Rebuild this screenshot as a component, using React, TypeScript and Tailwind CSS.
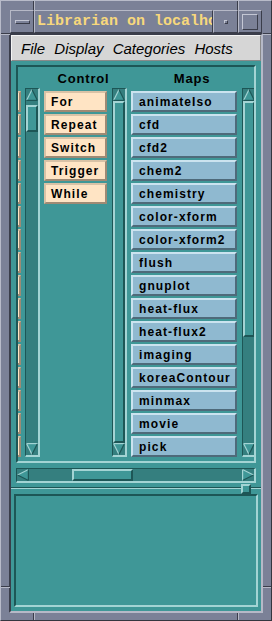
import React from 'react';

const controls = ['For', 'Repeat', 'Switch', 'Trigger', 'While'];
const maps = [
  'animateIso', 'cfd', 'cfd2', 'chem2', 'chemistry', 'color-xform', 'color-xform2', 'flush',
  'gnuplot', 'heat-flux', 'heat-flux2', 'imaging', 'koreaContour', 'minmax', 'movie', 'pick',
];

function UpArrow() {
  return (
    <svg width="12" height="12" viewBox="0 0 12 12" className="block shrink-0">
      <polygon points="6,1 1,11 11,11" fill="#3f9797" />
      <line x1="6" y1="0.5" x2="0.8" y2="11" stroke="#a3d4d4" strokeWidth="1.2" />
      <line x1="6" y1="0.5" x2="11.2" y2="11" stroke="#1d5656" strokeWidth="1.2" />
      <line x1="0.5" y1="11.4" x2="11.5" y2="11.4" stroke="#1d5656" strokeWidth="1.2" />
    </svg>
  );
}

function DownArrow() {
  return (
    <svg width="12" height="12" viewBox="0 0 12 12" className="block shrink-0">
      <polygon points="1,1 11,1 6,11" fill="#3f9797" />
      <line x1="0.5" y1="0.6" x2="11.5" y2="0.6" stroke="#a3d4d4" strokeWidth="1.2" />
      <line x1="0.8" y1="1" x2="6" y2="11.5" stroke="#a3d4d4" strokeWidth="1.2" />
      <line x1="11.2" y1="1" x2="6" y2="11.5" stroke="#1d5656" strokeWidth="1.2" />
    </svg>
  );
}

function LeftArrow() {
  return (
    <svg width="12" height="12" viewBox="0 0 12 12" className="block shrink-0">
      <polygon points="1,6 11,1 11,11" fill="#3f9797" />
      <line x1="0.5" y1="6" x2="11" y2="0.8" stroke="#a3d4d4" strokeWidth="1.2" />
      <line x1="0.5" y1="6" x2="11" y2="11.2" stroke="#1d5656" strokeWidth="1.2" />
      <line x1="11.4" y1="0.5" x2="11.4" y2="11.5" stroke="#1d5656" strokeWidth="1.2" />
    </svg>
  );
}

function RightArrow() {
  return (
    <svg width="12" height="12" viewBox="0 0 12 12" className="block shrink-0">
      <polygon points="1,1 11,6 1,11" fill="#3f9797" />
      <line x1="0.6" y1="0.5" x2="0.6" y2="11.5" stroke="#a3d4d4" strokeWidth="1.2" />
      <line x1="1" y1="0.8" x2="11.5" y2="6" stroke="#a3d4d4" strokeWidth="1.2" />
      <line x1="1" y1="11.2" x2="11.5" y2="6" stroke="#1d5656" strokeWidth="1.2" />
    </svg>
  );
}

function VScroll({ thumbClass, tail }: { thumbClass: string; tail: boolean }) {
  return (
    <div className="w-[15px] shrink-0 h-full flex flex-col bg-[#357f7f] border-t border-l border-r-2 border-b-2 border-t-[#1d5656] border-l-[#1d5656] border-r-[#a3d4d4] border-b-[#a3d4d4]">
      <UpArrow />
      <div className="flex-1 flex flex-col">
        <div
          className={
            'w-[12px] bg-[#3f9797] border-2 border-t-[#a3d4d4] border-l-[#a3d4d4] border-r-[#1d5656] border-b-[#1d5656] ' +
            thumbClass
          }
        />
        {tail ? <div className="flex-1" /> : null}
      </div>
      <DownArrow />
    </div>
  );
}

function CtrlBtn({ label }: { label: string }) {
  return (
    <div className="w-[63px] h-[21px] shrink-0 bg-[#ffe4c4] border-2 border-t-[#d9c2a6] border-l-[#d9c2a6] border-r-[#9f8a74] border-b-[#9f8a74] flex items-center pl-[5px] text-[12px] font-bold tracking-[1.1px] text-black leading-none">
      {label}
    </div>
  );
}

function MapBtn({ label }: { label: string }) {
  return (
    <div className="w-[106px] h-[21px] shrink-0 bg-[#8fb9d0] border-2 border-t-[#cbe3ef] border-l-[#cbe3ef] border-r-[#4e6a7a] border-b-[#4e6a7a] flex items-center pl-[6px] text-[12px] font-bold tracking-[1.1px] text-black leading-none whitespace-nowrap">
      {label}
    </div>
  );
}

function Tick({ cls }: { cls: string }) {
  return <div className={'absolute ' + cls} />;
}

export default function App() {
  return (
    <div className="relative w-[272px] h-[621px] bg-[#7b8197] border border-t-[#b8bbc9] border-l-[#b8bbc9] border-r-[#34363f] border-b-[#34363f] pt-[9px] pl-[9px] pr-[9px] pb-[7px] flex flex-col font-['Liberation_Sans',_Arial,_sans-serif] overflow-hidden">
      {/* frame ticks */}
      <Tick cls="left-[32px] top-0 w-[1px] h-[9px] bg-[#3a3d4a]" />
      <Tick cls="left-[33px] top-0 w-[1px] h-[9px] bg-[#b6b9c7]" />
      <Tick cls="left-[236px] top-0 w-[1px] h-[9px] bg-[#3a3d4a]" />
      <Tick cls="left-[237px] top-0 w-[1px] h-[9px] bg-[#b6b9c7]" />
      <Tick cls="left-0 top-[32px] w-[9px] h-[1px] bg-[#3a3d4a]" />
      <Tick cls="left-0 top-[33px] w-[9px] h-[1px] bg-[#b6b9c7]" />
      <Tick cls="right-0 top-[32px] w-[8px] h-[1px] bg-[#3a3d4a]" />
      <Tick cls="right-0 top-[33px] w-[8px] h-[1px] bg-[#b6b9c7]" />
      <Tick cls="left-0 top-[585px] w-[9px] h-[1px] bg-[#3a3d4a]" />
      <Tick cls="left-0 top-[586px] w-[9px] h-[1px] bg-[#b6b9c7]" />
      <Tick cls="right-0 top-[585px] w-[8px] h-[1px] bg-[#3a3d4a]" />
      <Tick cls="right-0 top-[586px] w-[8px] h-[1px] bg-[#b6b9c7]" />
      <Tick cls="left-[32px] bottom-0 w-[1px] h-[7px] bg-[#3a3d4a]" />
      <Tick cls="left-[33px] bottom-0 w-[1px] h-[7px] bg-[#b6b9c7]" />
      <Tick cls="left-[236px] bottom-0 w-[1px] h-[7px] bg-[#3a3d4a]" />
      <Tick cls="left-[237px] bottom-0 w-[1px] h-[7px] bg-[#b6b9c7]" />

      {/* title bar */}
      <div className="flex h-[23px] shrink-0">
        <div className="w-[24px] h-full border border-t-[#b6b9c7] border-l-[#b6b9c7] border-r-[#3a3d4a] border-b-[#3a3d4a] flex items-center justify-center">
          <div className="w-[15px] h-[4px] border border-t-[#c4c7d4] border-l-[#c4c7d4] border-r-[#3a3d4a] border-b-[#3a3d4a]" />
        </div>
        <div className="w-[179px] h-full border border-t-[#b6b9c7] border-l-[#b6b9c7] border-r-[#3a3d4a] border-b-[#3a3d4a] overflow-hidden flex items-center pl-[2px]">
          <span className="font-['Liberation_Mono',_monospace] font-bold text-[15px] leading-none text-[#f7d87c] whitespace-nowrap">
            Librarian on localhost
          </span>
        </div>
        <div className="w-[25px] h-full border border-t-[#b6b9c7] border-l-[#b6b9c7] border-r-[#3a3d4a] border-b-[#3a3d4a] flex items-center justify-center">
          <div className="w-[4px] h-[4px] border border-t-[#c4c7d4] border-l-[#c4c7d4] border-r-[#3a3d4a] border-b-[#3a3d4a]" />
        </div>
        <div className="w-[24px] h-full border border-t-[#b6b9c7] border-l-[#b6b9c7] border-r-[#3a3d4a] border-b-[#3a3d4a] flex items-center justify-center">
          <div className="w-[16px] h-[16px] border border-t-[#c4c7d4] border-l-[#c4c7d4] border-r-[#3a3d4a] border-b-[#3a3d4a]" />
        </div>
      </div>

      {/* client area */}
      <div className="-mx-[1px] flex-1 flex flex-col border-2 border-t-[#3a3d4a] border-l-[#3a3d4a] border-r-[#b6b9c7] border-b-[#b6b9c7]">
        {/* menu bar */}
        <div className="h-[26px] shrink-0 bg-[#d6d6d6] border border-t-[#f4f4f4] border-l-[#f4f4f4] border-r-[#8a8a8a] border-b-[#8a8a8a] flex items-center pl-[9px] pt-[1px]">
          <span className="italic text-[15px] leading-none text-black [word-spacing:5px] whitespace-nowrap">
            File Display Categories Hosts
          </span>
        </div>

        {/* teal content */}
        <div className="flex-1 bg-[#3f9797] flex flex-col pt-[4px] pb-[4px]">
          {/* scrolled window */}
          <div className="mx-[5px] h-[398px] shrink-0 border-2 border-t-[#1d5656] border-l-[#1d5656] border-r-[#a3d4d4] border-b-[#a3d4d4] flex overflow-hidden">
            {/* hidden left column */}
            <div className="w-[22px] shrink-0 flex flex-col">
              <div className="h-[21px] shrink-0" />
              <div className="h-[369px] flex">
                <div className="w-[3px] flex flex-col gap-[2px] pt-[3px]">
                  {maps.map((m) => (
                    <div
                      key={m}
                      className="w-[3px] h-[21px] shrink-0 bg-[#ffe4c4] border-t-2 border-r-2 border-b-2 border-t-[#d9c2a6] border-r-[#9f8a74] border-b-[#9f8a74]"
                    />
                  ))}
                </div>
                <div className="w-[4px]" />
                <VScroll thumbClass="mt-[4px] h-[27px]" tail={true} />
              </div>
            </div>

            {/* Control column */}
            <div className="w-[87px] shrink-0 flex flex-col">
              <div className="h-[21px] shrink-0 flex items-center justify-center pt-[1px] text-[13px] font-bold tracking-[0.8px] text-black leading-none">
                Control
              </div>
              <div className="h-[369px] flex">
                <div className="pl-[4px] pt-[3px] flex flex-col gap-[2px]">
                  {controls.map((c) => (
                    <CtrlBtn key={c} label={c} />
                  ))}
                </div>
                <div className="w-[5px]" />
                <VScroll thumbClass="flex-1" tail={false} />
              </div>
            </div>

            {/* Maps column */}
            <div className="w-[130px] shrink-0 flex flex-col">
              <div className="h-[21px] shrink-0 flex items-center justify-center pt-[1px] text-[13px] font-bold tracking-[0.8px] text-black leading-none">
                Maps
              </div>
              <div className="h-[369px] flex">
                <div className="pl-[4px] pt-[3px] flex flex-col gap-[2px]">
                  {maps.map((m) => (
                    <MapBtn key={m} label={m} />
                  ))}
                </div>
                <div className="w-[5px]" />
                <VScroll thumbClass="h-[236px]" tail={true} />
              </div>
            </div>
          </div>

          {/* horizontal scrollbar */}
          <div className="mx-[5px] mt-[5px] h-[15px] shrink-0 flex bg-[#357f7f] border-t border-l border-r-2 border-b-2 border-t-[#1d5656] border-l-[#1d5656] border-r-[#a3d4d4] border-b-[#a3d4d4]">
            <LeftArrow />
            <div className="flex-1 flex">
              <div className="ml-[43px] w-[61px] h-[12px] bg-[#3f9797] border-2 border-t-[#a3d4d4] border-l-[#a3d4d4] border-r-[#1d5656] border-b-[#1d5656]" />
            </div>
            <RightArrow />
          </div>

          {/* sash / separator */}
          <div className="relative h-[11px] shrink-0">
            <div className="absolute left-0 right-0 top-[4px] h-[1px] bg-[#1d5656]" />
            <div className="absolute left-0 right-0 top-[5px] h-[1px] bg-[#a3d4d4]" />
            <div className="absolute left-[230px] top-[1px] w-[10px] h-[10px] bg-[#3f9797] border-2 border-t-[#a3d4d4] border-l-[#a3d4d4] border-r-[#1d5656] border-b-[#1d5656]" />
          </div>

          {/* bottom panel */}
          <div className="mx-[3px] flex-1 border-2 border-t-[#1d5656] border-l-[#1d5656] border-r-[#a3d4d4] border-b-[#a3d4d4] bg-[#3f9797]" />
        </div>
      </div>
    </div>
  );
}
